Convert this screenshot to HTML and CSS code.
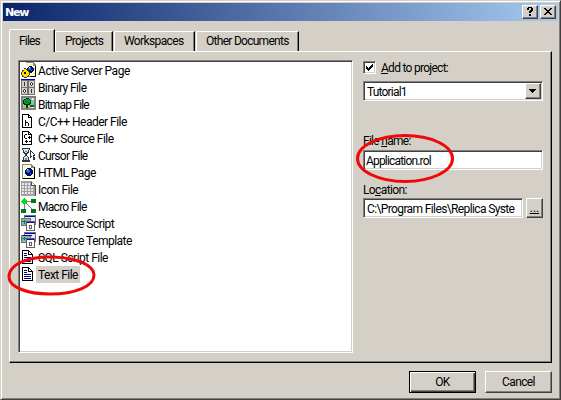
FILE: index.html
```
<!DOCTYPE html>
<html lang="en">
<head>
<meta charset="utf-8">
<title>New</title>
<link rel="stylesheet" href="styles.css">
</head>
<body>
<svg class="defs" width="0" height="0" aria-hidden="true">
  <symbol id="page" viewBox="0 0 16 16">
    <path fill="#000" d="M3 1h7v1h1v1h1v1h1v11H3z"/>
    <path fill="#fff" d="M4 2h5v3h3v9H4zM10 3h1v1h-1z"/>
  </symbol>
  <symbol id="textpage" viewBox="0 0 16 16">
    <path fill="#000" d="M2 1h7v1h1v1h1v1h1v1h1v10H2z"/>
    <path fill="#fff" d="M3 2h5v4h4v8H3zM9 3h1v1h1v1H9z"/>
    <path fill="#000080" d="M4 4h3v1H4zM4 6h3v1H4zM4 8h7v1H4zM4 10h7v1H4zM4 12h7v1H4z"/>
  </symbol>
  <symbol id="globe" viewBox="0 0 8 8">
    <path fill="#000080" d="M2 0h4v1h1v1h1v4H7v1H6v1H2V7H1V6H0V2h1V1h1z"/>
    <path fill="#0070c0" d="M1 2h1V1h2v1h1v2H4v1H2V4H1z"/>
    <path fill="#30a060" d="M2 2h2v1h1v1H3V3H2zM5 5h1v1H5z"/>
    <path fill="#c0f0ff" d="M2 1h1v1H2z"/>
  </symbol>
  <symbol id="windows" viewBox="0 0 16 16">
    <path fill="#707070" d="M3 0h12v10H3z"/>
    <path fill="#e8e8e8" d="M4 1h10v8H4z"/>
    <path fill="#0000c0" d="M4 1h10v1H4z"/>
    <path fill="#607870" d="M0 3h10v8H0z"/>
    <path fill="#98b0a8" d="M1 4h8v6H1z"/>
    <path fill="#008060" d="M1 6h4v1H1zM3 5h1v4H3z"/>
    <path fill="#606060" d="M5 6h9v10H5z"/>
    <path fill="#fff" d="M6 7h7v8H6z"/>
    <path fill="#0000d0" d="M6 7h7v1H6z"/>
    <path fill="#606060" d="M8 10h3v4H8z"/>
    <path fill="#fff" d="M9 11h1v2H9z"/>
  </symbol>
</svg>
<div class="dialog">
  <header class="titlebar">
    <h1>New</h1>
    <button class="caption" aria-label="Help"><svg width="16" height="14" viewBox="0 0 16 14"><path d="M5 3h1V2h4v1h1v3h-1v1H9v1H7V6h1V5h1V3H7v2H5zM7 9h2v2H7z"/></svg></button>
    <button class="caption" aria-label="Close"><svg width="16" height="14" viewBox="0 0 16 14"><path d="M4 3h2v1h1v1h2V4h1V3h2v1h-1v1h-1v1H9v1h1v1h1v1h1v1h-2V9H9V8H7v1H6v1H4V9h1V8h1V7h1V6H6V5H5V4H4z"/></svg></button>
  </header>
  <nav class="tabs">
    <span class="tab active s8">Files</span>
    <span class="tab projects s7">Projects</span>
    <span class="tab workspaces s6">Workspaces</span>
    <span class="tab others s7">Other Documents</span>
  </nav>
  <main class="panel">
    <ul class="list">
      <li><svg class="icon" viewBox="0 0 16 16"><path fill="#909080" d="M5 0h8v1h1v1h1v13H5z"/><path fill="#ffffd0" d="M5 1h7v3h2v10H5z"/><path fill="#000" d="M14 4h1v11H9v-1h5z"/><path fill="#e0d890" d="M6 2h1v1H6zM9 2h1v1H9zM13 6h1v1h-1zM13 11h1v1h-1z"/><use href="#globe" x="6" y="4" width="7" height="7"/><path fill="#504800" d="M3 6h2v1h1v1h2v2h1v3H8v2H6v1H3v-1H1v-2H0v-3h1V8h2z"/><path fill="#ffe000" d="M3 7h2v1h1v1h1v1h1v3H7v1H6v1H3v-1H2v-1H1v-3h1V9h1z"/><path fill="#000" d="M3 10h2v2H3z"/></svg><span class="s45">Active Server Page</span></li>
      <li><svg class="icon" viewBox="0 0 16 16"><path fill="#707070" d="M0 0h14v16H0z"/><path fill="#0000d0" d="M0 0h14v1H0z"/><path fill="#d4d0c8" d="M1 2h5v6H1zM8 2h5v6H8zM1 9h5v6H1zM8 9h5v6H8z"/><path fill="#303030" d="M3 3h1v4H3zM10 3h1v1h1v2h-1v1h-1V6H9V4h1zM3 10h1v1h1v2H4v1H3v-1H2v-2h1zM10 10h1v4h-1z"/><path fill="#fff" d="M10 4h1v2h-1zM3 11h1v2H3z"/></svg><span class="s6">Binary File</span></li>
      <li><svg class="icon" viewBox="0 0 16 16"><path fill="#808080" d="M0 0h15v14H0z"/><path fill="#80c0d0" d="M2 2h11v7H2z"/><path fill="#c0b878" d="M2 9h11v3H2z"/><path fill="#003010" d="M2 4h1V3h2V2h3v1h1v1h1v4H9v1H7v3H5V9H3V8H2z"/><path fill="#00a020" d="M3 4h2V3h3v1h1v3H8v1H4V7H3z"/><path fill="#006020" d="M5 5h1v1H5zM7 6h1v1H7zM9 9h4v2H9z"/><path fill="#ffff80" d="M11 2h2v2h-2zM10 11h3v1h-3z"/></svg><span class="s8">Bitmap File</span></li>
      <li><svg class="icon" viewBox="0 0 16 16"><use href="#page" x="-2" width="16" height="16"/><path fill="#000" d="M4 7h1v2h2v1h1v3H7v-3H5v3H4z"/></svg><span class="s5">C/C++ Header File</span></li>
      <li><svg class="icon" viewBox="0 0 16 16"><use href="#page" x="-2" width="16" height="16"/><path fill="#000" d="M4 4h2v1H4v3h2v1H4V8H3V5h1zM7 7h3v1H7zM8 6h1v3H8zM4 11h3v1H4zM5 10h1v3H5zM8 11h2v1H8z"/></svg><span class="s5">C++ Source File</span></li>
      <li><svg class="icon" viewBox="0 0 16 16"><path fill="#303838" d="M1 1h8v2H8v3H7v1H6v2h1v1h1v3h1v2H1v-2h1v-3h1V9h1V7H3V6H2V3H1z"/><path fill="#d8e8ec" d="M2 2h6v1H7v2H6v1H4V5H3V3H2zM5 8v1h1v1h1v3H3v-3h1V9z"/><path fill="#609898" d="M4 4h2v1H4zM4 11h2v2H4z"/><path fill="#303838" d="M9 3h1v1h1v1h1v1h1v1h1v2h-1v1h1v3h-2v-2h-1v-1h-1v1H9z"/><path fill="#fff" d="M10 5h1v1h1v1h1v1h-1v3h-1V9h-1z"/></svg><span class="s7">Cursor File</span></li>
      <li><svg class="icon" viewBox="0 0 16 16"><path fill="#888" d="M1 0h10v1h1v1h1v1h1v12H1z"/><path fill="#ffffd0" d="M2 1h8v3h3v10H2z"/><path fill="#000" d="M13 3h1v12H2v-1h11z"/><path fill="#e0e080" d="M3 2h1v1H3zM6 2h1v1H6zM3 12h1v1H3zM7 13h1v1H7zM12 12h1v1h-1z"/><use href="#globe" x="4" y="4" width="8" height="8"/></svg><span class="s5">HTML Page</span></li>
      <li><svg class="icon" viewBox="0 0 16 16"><path fill="#a0a0a0" d="M0 0h11v1h1v1h1v1h1v1h1v11H0z"/><path fill="#e8e8e8" d="M1 2h2v2H1zM4 2h2v2H4zM7 2h2v2H7zM1 5h2v2H1zM4 5h2v2H4zM7 5h2v2H7zM10 5h2v2h-2zM1 8h2v2H1zM4 8h2v2H4zM7 8h2v2H7zM10 8h2v2h-2zM1 11h2v2H1zM4 11h2v2H4zM7 11h2v2H7zM10 11h2v2h-2z"/><path fill="#fff" d="M11 2h1v1h1v1h-2z"/><path fill="#505050" d="M10 1h1v3h4v11h-1V5h-4z"/></svg><span class="s5">Icon File</span></li>
      <li><svg class="icon" viewBox="0 0 16 16"><path fill="none" stroke="#808080" d="M4 3.500h8M4 4l8 8M3.500 6v5"/><path fill="#00e010" d="M3 0h1v1h1v1h1v1h1v1H6v1H5v1H4v1H3V6H2V5H1V4H0V3h1V2h1V1h1z"/><path fill="#007818" d="M10 1h5v4h-5zM0 11h5v4H0zM10 11h5v4h-5z"/></svg><span class="s7">Macro File</span></li>
      <li><svg class="icon" viewBox="0 0 16 16"><use href="#windows" width="16" height="16"/></svg><span class="s5">Resource Script</span></li>
      <li><svg class="icon" viewBox="0 0 16 16"><use href="#windows" width="16" height="16"/><path fill="#0000c0" d="M2 3h9v1H2z"/><path fill="#70b8b0" d="M1 8h4v1H1z"/></svg><span class="s5">Resource Template</span></li>
      <li><svg class="icon" viewBox="0 0 16 16"><use href="#textpage" x="-1" width="16" height="16"/></svg><span class="s5">SQL Script File</span></li>
      <li><svg class="icon" viewBox="0 0 16 16"><use href="#textpage" x="-1" width="16" height="16"/></svg><span class="selected s5">Text File</span></li>
    </ul>
    <form class="options">
      <label class="check"><span class="box"><svg width="9" height="9" viewBox="0 0 9 9"><path d="M1 3h1v1h1v1h1V4h1V3h1V2h1V1h1v3H7v1H6v1H5v1H4v1H3V7H2V6H1z"/></svg></span><span class="s7"><u>A</u>dd to project:</span></label>
      <div class="field combo"><span class="s8">Tutorial1</span><span class="drop"><svg width="16" height="16" viewBox="0 0 16 16"><path d="M4 6h7v1h-1v1H9v1H8v1H7V9H6V8H5V7H4z"/></svg></span></div>
      <div class="label name s7">File <u>n</u>ame:</div>
      <div class="field filename"><span class="s8">Application.rol</span></div>
      <div class="label location s6">Lo<u>c</u>ation:</div>
      <div class="path"><div class="field"><span class="s6">C:\Program Files\Replica Syste</span></div><span class="browse"><u>...</u></span></div>
    </form>
  </main>
  <footer class="actions">
    <button class="push default s6">OK</button>
    <button class="push s6">Cancel</button>
  </footer>
  <svg class="marks" width="561" height="400" viewBox="0 0 561 400"><path d="M9 277C9 264 29 256 53 257C77 258 94 265 94 275C94 286 76 294 50 294C27 294 9 287 9 277Z"/><ellipse cx="405" cy="158.500" rx="47.500" ry="23"/></svg>
</div>
</body>
</html>
```
FILE: styles.css
```
* { box-sizing: border-box; }
body { margin: 0; }
.defs { display: block; }
svg { shape-rendering: crispEdges; }

.dialog {
  position: relative;
  width: 561px;
  height: 400px;
  padding: 2px;
  background: #d4d0c8;
  border: 1px solid #d4d0c8;
  border-right-color: #404040;
  border-bottom-color: #404040;
  box-shadow: inset 1px 1px #fff, inset -1px -1px #808080;
  font: 12px/17px Roboto, "Liberation Sans", sans-serif;
  color: #000;
}
u { text-decoration-thickness: 1px; text-underline-offset: 1px; }
.s45 { letter-spacing: -0.45px; }
.s5 { letter-spacing: -0.52px; }
.s6 { letter-spacing: -0.62px; }
.s7 { letter-spacing: -0.72px; }
.s8 { letter-spacing: -0.82px; }

.titlebar {
  display: flex;
  align-items: center;
  gap: 2px;
  height: 18px;
  padding: 0 2px;
  background: linear-gradient(90deg, #0a246a, #a6caf0);
}
.titlebar h1 {
  flex: 1;
  margin: 0;
  padding-top: 1px;
  font: bold 11px/18px "DejaVu Sans", sans-serif;
  letter-spacing: -1.2px;
  color: #fff;
}
button { margin: 0; padding: 0; font: inherit; color: inherit; }
.caption, .drop, .browse, .push {
  background: #d4d0c8;
  border: 1px solid #fff;
  border-right-color: #404040;
  border-bottom-color: #404040;
  box-shadow: inset -1px -1px #808080;
}
.caption { width: 16px; height: 14px; }
.caption svg, .drop svg { display: block; margin: -1px; }

.tabs {
  position: relative;
  z-index: 1;
  display: flex;
  align-items: flex-end;
  height: 31px;
  margin-left: 6px;
}
.tab {
  height: 20px;
  margin-bottom: 1px;
  padding-left: 9px;
  line-height: 19px;
  white-space: nowrap;
  border: 1px solid #fff;
  border-right-color: #000;
  border-bottom: 0;
  border-radius: 2px 0 0 0;
  box-shadow: inset -1px 0 #808080;
}
.active {
  width: 46px;
  height: 23px;
  margin-bottom: 0;
  line-height: 23px;
  background: #d4d0c8;
}
.projects { width: 58px; }
.workspaces { width: 81px; margin-left: 1px; }
.others { width: 103px; margin-left: 1px; }

.panel {
  display: flex;
  gap: 10px;
  width: 543px;
  height: 312px;
  margin: -1px 0 0 6px;
  padding: 8px;
  border: 1px solid #fff;
  border-right-color: #000;
  border-bottom-color: #000;
  box-shadow: inset -1px -1px #808080;
}
.list, .field, .box {
  background: #fff;
  border: 1px solid #808080;
  border-right-color: #fff;
  border-bottom-color: #fff;
  box-shadow: inset 1px 1px #404040, inset -1px -1px #d4d0c8;
}
.list {
  width: 335px;
  height: 293px;
  margin: 0;
  padding: 1px;
  list-style: none;
}
.list li {
  display: flex;
  align-items: flex-start;
  height: 17px;
}
.list span { height: 17px; padding: 0 2px; line-height: 19px; }
.icon { width: 16px; height: 16px; margin: 0 -1px 0 1px; overflow: hidden; }
.list .selected { background: #d4d0c8; }

.options { width: 180px; }
.check { display: flex; height: 21px; padding-top: 1px; }
.check > .s7 { margin-left: 5px; margin-top: -1px; }
.box { width: 13px; height: 13px; padding: 1px; }
.box svg { display: block; }
.field {
  display: flex;
  height: 20px;
  padding: 1px 1px 1px 3px;
  line-height: 18px;
  white-space: nowrap;
}
.combo { justify-content: space-between; }
.drop { width: 16px; height: 16px; }
.label { height: 17px; line-height: 18px; }
.name { margin-top: 31px; }
.filename { margin-top: 1px; padding-left: 2px; }
.location { margin-top: 11px; }
.path { display: flex; gap: 3px; }
.path .field { width: 160px; overflow: hidden; }
.browse { width: 17px; height: 20px; line-height: 18px; text-align: center; }

.actions { display: flex; justify-content: flex-end; gap: 9px; padding: 8px 6px 0; }
.push { width: 67px; height: 22px; line-height: 20px; }
.default {
  border-color: #000;
  box-shadow: inset 1px 1px #fff, inset -1px -1px #404040, inset -2px -2px #808080;
}
.marks {
  position: absolute;
  left: -1px;
  top: -1px;
  pointer-events: none;
  fill: none;
  stroke: #f00808;
  stroke-width: 3;
  shape-rendering: auto;
}
```
